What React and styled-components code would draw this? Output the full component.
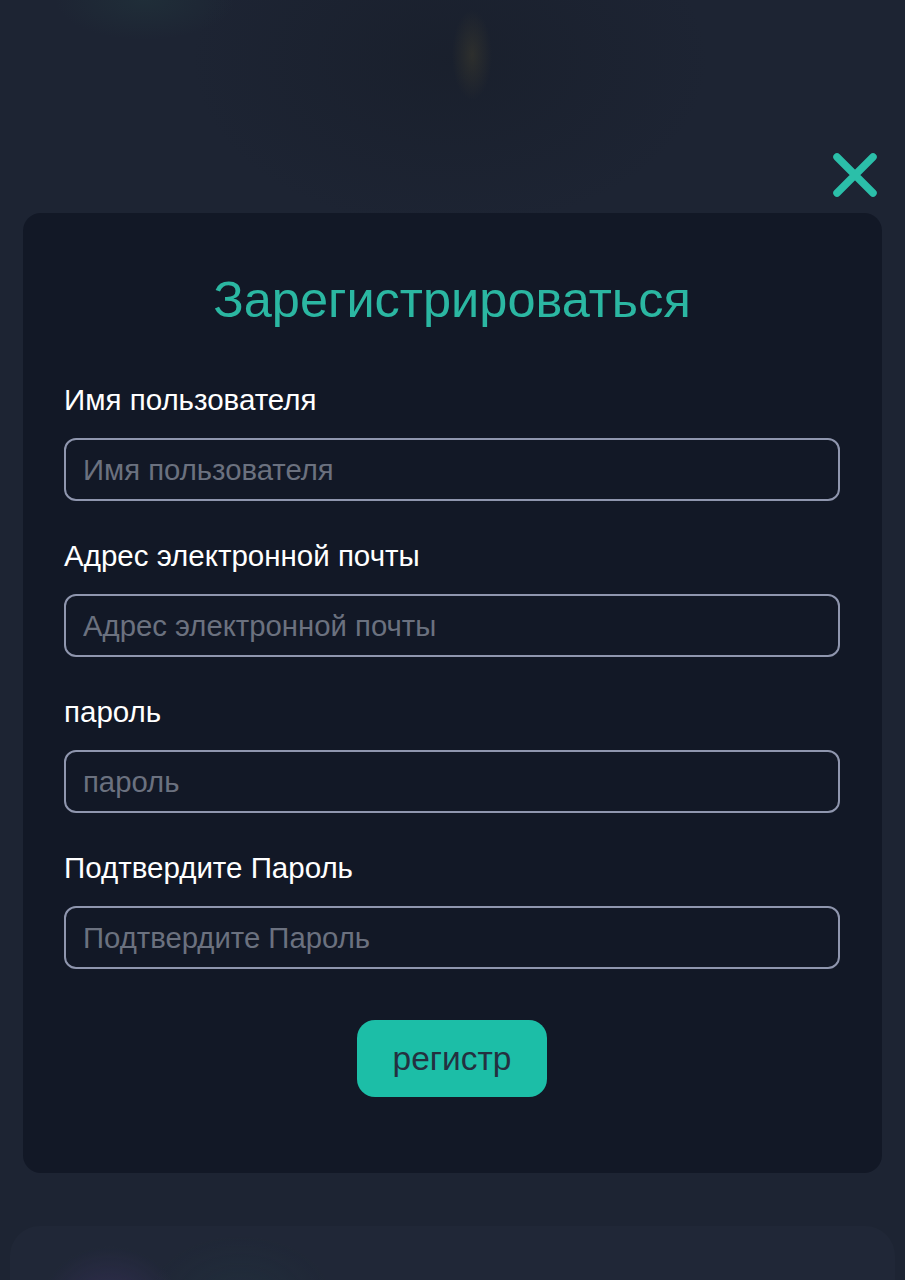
import React from "react";
import styled, { createGlobalStyle } from "styled-components";

const Global = createGlobalStyle`
  html, body { margin: 0; padding: 0; }
  body {
    background: #1d2433;
    font-family: "Liberation Sans", Arial, sans-serif;
    overflow: hidden;
  }
`;

const Page = styled.div`
  position: relative;
  width: 905px;
  height: 1280px;
  overflow: hidden;
  display: flex;
  flex-direction: column;
  box-sizing: border-box;
  padding: 151px 23px 0 23px;
  background:
    radial-gradient(ellipse 20px 45px at 472px 55px, rgba(95, 85, 45, 0.28), transparent 100%),
    radial-gradient(ellipse 90px 40px at 145px 0px, rgba(40, 80, 75, 0.22), transparent 100%),
    radial-gradient(ellipse 260px 170px at 450px 60px, rgba(24, 30, 42, 0.7), transparent 100%),
    #1d2433;
`;

const TopBar = styled.div`
  display: flex;
  justify-content: flex-end;
  padding-right: 3px;
`;

const CloseButton = styled.button`
  width: 48px;
  height: 48px;
  padding: 0;
  border: none;
  background: transparent;
  cursor: pointer;
  display: flex;
  align-items: center;
  justify-content: center;
`;

const Card = styled.div`
  margin-top: 14px;
  background: #121826;
  border-radius: 18px;
  padding: 58px 42px 76px 41px;
  display: flex;
  flex-direction: column;
`;

const Title = styled.h1`
  margin: 0 0 54px 0;
  text-align: center;
  color: #2bb7a2;
  font-weight: 400;
  font-size: 50.5px;
  line-height: 58px;
`;

const Fields = styled.div`
  display: flex;
  flex-direction: column;
  gap: 38px;
`;

const Field = styled.div`
  display: flex;
  flex-direction: column;
`;

const Label = styled.label`
  color: #ffffff;
  font-size: 29.5px;
  line-height: 33px;
  margin-bottom: 22px;
`;

const Input = styled.input`
  box-sizing: border-box;
  height: 63px;
  width: 100%;
  background: transparent;
  border: 2px solid #8f96ae;
  border-radius: 12px;
  padding: 0 17px;
  color: #ffffff;
  font-family: "Liberation Sans", Arial, sans-serif;
  font-size: 29.3px;
  outline: none;
  &::placeholder { color: #6b717f; }
`;

const Actions = styled.div`
  display: flex;
  justify-content: center;
  margin-top: 51px;
`;

const SubmitButton = styled.button`
  width: 190px;
  height: 77px;
  border: none;
  border-radius: 18px;
  background: #1cbea7;
  color: #243040;
  font-family: "Liberation Sans", Arial, sans-serif;
  font-size: 33.5px;
  cursor: pointer;
`;

const PreviewCard = styled.div`
  margin: 53px -13px 0 -13px;
  height: 80px;
  flex-shrink: 0;
  border-radius: 30px 30px 0 0;
  background:
    radial-gradient(ellipse 70px 60px at 100px 80px, rgba(70, 55, 110, 0.45), transparent 100%),
    radial-gradient(ellipse 90px 60px at 230px 70px, rgba(35, 60, 70, 0.3), transparent 100%),
    rgba(34, 42, 58, 0.55);
`;

const fields = [
  "Имя пользователя",
  "Адрес электронной почты",
  "пароль",
  "Подтвердите Пароль",
];

export default function App() {
  return (
    <>
      <Global />
      <Page>
        <TopBar>
          <CloseButton aria-label="close">
            <svg width="48" height="48" viewBox="0 0 48 48">
              <path d="M6 6 L42 42 M42 6 L6 42" stroke="#2bbfa9" strokeWidth="7.5" strokeLinecap="round" fill="none" />
            </svg>
          </CloseButton>
        </TopBar>
        <Card>
          <Title>Зарегистрироваться</Title>
          <Fields>
            {fields.map((f) => (
              <Field key={f}>
                <Label>{f}</Label>
                <Input placeholder={f} type={f.toLowerCase().includes("пароль") ? "password" : "text"} />
              </Field>
            ))}
          </Fields>
          <Actions>
            <SubmitButton>регистр</SubmitButton>
          </Actions>
        </Card>
        <PreviewCard />
      </Page>
    </>
  );
}
